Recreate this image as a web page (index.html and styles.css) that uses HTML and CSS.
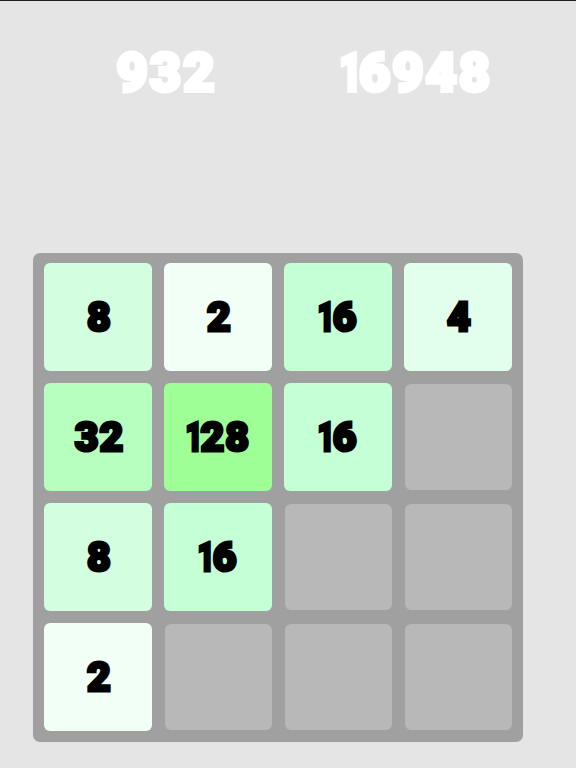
FILE: index.html
```
<!DOCTYPE html>
<html lang="en">
<head>
    <meta charset="UTF-8">
    <meta name="viewport" content="width=device-width, initial-scale=1.0">
    <title>2048</title>
    <link rel="stylesheet" href="styles.css">
</head>
<body>
<header class="scores">
    <div class="score current"><span>932</span></div>
    <div class="score best"><span><i>1</i>6948</span></div>
</header>

<main class="board">
    <div class="tile tile-8"><span>8</span></div>
    <div class="tile tile-2"><span>2</span></div>
    <div class="tile tile-16"><span><i>1</i>6</span></div>
    <div class="tile tile-4"><span>4</span></div>

    <div class="tile tile-32"><span>32</span></div>
    <div class="tile tile-128"><span><i>1</i>28</span></div>
    <div class="tile tile-16"><span><i>1</i>6</span></div>
    <div class="tile empty"></div>

    <div class="tile tile-8"><span>8</span></div>
    <div class="tile tile-16"><span><i>1</i>6</span></div>
    <div class="tile empty"></div>
    <div class="tile empty"></div>

    <div class="tile tile-2"><span>2</span></div>
    <div class="tile empty"></div>
    <div class="tile empty"></div>
    <div class="tile empty"></div>
</main>
</body>
</html>
```

FILE: styles.css
```
* {
    box-sizing: border-box;
}
body {
    margin: 0;
    height: 768px;
    overflow: hidden;
    background-color: #e5e5e5;
    border-top: 1px solid #231f20;
    font-family: Roboto, "Liberation Sans", sans-serif;
    font-weight: 900;
}
.scores {
    display: grid;
    grid-template-columns: 333px 170px;
    height: 252px;
    padding-top: 42px;
    color: #fff;
}
.score {
    height: 60px;
    display: flex;
    align-items: center;
    justify-content: center;
    font-size: 54px;
    line-height: 60px;
    letter-spacing: 2px;
    -webkit-text-stroke: 4px #fff;
}
.board {
    width: 490px;
    height: 489px;
    margin-left: 33px;
    padding: 10px 11px;
    display: grid;
    grid-template-columns: repeat(4, 108px);
    grid-auto-rows: 108px;
    gap: 12px;
    background-color: #a0a0a0;
    border-radius: 7px;
}
.tile {
    display: flex;
    align-items: center;
    justify-content: center;
    border-radius: 6px;
    padding-left: 3px;
    color: #000;
    font-size: 41px;
    line-height: 48px;
    letter-spacing: 1px;
    -webkit-text-stroke: 3px #000;
}
/* the 1 is narrower than the other digits */
.tile i,
.score i {
    display: inline-block;
    margin-left: -0.22em;
    font-style: normal;
    letter-spacing: -0.08em;
    transform: scaleX(0.74);
    transform-origin: right;
}
.empty {
    margin: 1px 0 1px 1px;
    background-color: #b8b8b8;
}
.tile-2 {
    background-color: #f1fff7;
}
.tile-4 {
    background-color: #e1ffec;
}
.tile-8 {
    background-color: #d3ffe0;
}
.tile-16 {
    background-color: #c5ffd5;
}
.tile-32 {
    background-color: #b6ffbf;
}
.tile-128 {
    background-color: #9eff96;
}
```
